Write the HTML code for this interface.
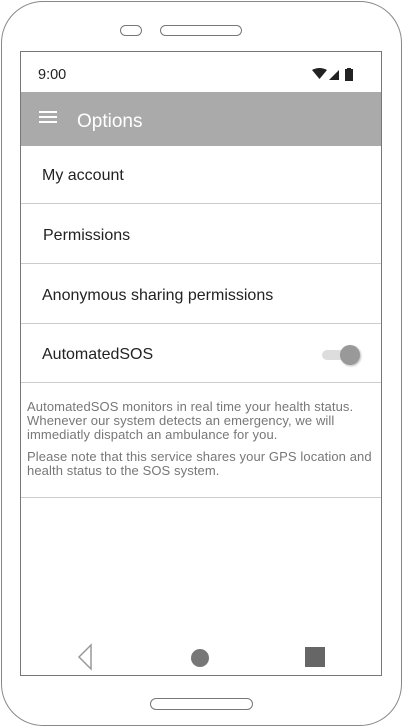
<!DOCTYPE html>
<html><head><meta charset="utf-8"><style>
*{margin:0;padding:0;box-sizing:border-box}
body{width:403px;height:727px;background:#fff;position:relative;overflow:hidden;font-family:"Liberation Sans",sans-serif;color:#222}
.phone{position:absolute;left:1px;top:1px;width:401px;height:725px;border:1.5px solid #888;border-radius:42px}
.pill{position:absolute;border:1.5px solid #777;border-radius:6px;background:#fff}
.screen{position:absolute;left:20px;top:51px;width:362px;height:625px;border:1.5px solid #777;background:#fff}
.status{position:absolute;left:0;top:0;width:100%;height:40px;font-size:14px}
.bar{position:absolute;left:0;top:40px;width:100%;height:54px;background:#aaa;color:#fff;font-size:19px}
.row{position:absolute;left:0;width:100%;border-bottom:1.5px solid #ccc;font-size:16px;color:#222}
.row span{position:absolute;left:21px}
.desc{position:absolute;left:6px;font-size:13px;color:#777;line-height:14px;width:352px;letter-spacing:0.1px}
</style></head><body>
<div class="phone"></div>
<div class="pill" style="left:120px;top:25px;width:22px;height:11px"></div>
<div class="pill" style="left:160px;top:25px;width:82px;height:11px"></div>
<div class="pill" style="left:150px;top:698px;width:103px;height:12px"></div>
<div class="screen">
 <div class="status"><span style="position:absolute;left:17px;top:15px;font-size:14.5px">9:00</span>
  <svg style="position:absolute;left:291px;top:16px" width="50" height="14">
   <path d="M0 2 Q7.5 -2 15 2 L7.5 11Z" fill="#222"/>
   <path d="M17 12 L27 2 L27 12Z" fill="#222"/>
   <rect x="33" y="1" width="8" height="12" fill="#222"/><rect x="35" y="0" width="4" height="2" fill="#222"/>
  </svg></div>
 <div class="bar">
  <svg style="position:absolute;left:18px;top:19px" width="20" height="14"><rect y="0" width="18" height="2" fill="#fff"/><rect y="5" width="18" height="2" fill="#fff"/><rect y="10" width="18" height="2" fill="#fff"/></svg>
  <span style="position:absolute;left:56px;top:19px">Options</span></div>
 <div class="row" style="top:94px;height:58px"><span style="top:21px">My account</span></div>
 <div class="row" style="top:152px;height:60px"><span style="top:23px;left:22px">Permissions</span></div>
 <div class="row" style="top:212px;height:60px"><span style="top:23px">Anonymous sharing permissions</span></div>
 <div class="row" style="top:272px;height:59px"><span style="top:22px">AutomatedSOS</span>
  <div style="position:absolute;left:301px;top:26px;width:34px;height:10px;border-radius:5px;background:#ddd"></div>
  <div style="position:absolute;left:319px;top:21px;width:20px;height:20px;border-radius:50%;background:#999;box-shadow:1px 1px 2px #bbb"></div></div>
 <div class="desc" style="top:348px">AutomatedSOS monitors in real time your health status. Whenever our system detects an emergency, we will immediatly dispatch an ambulance for you.</div>
 <div class="desc" style="top:398px">Please note that this service shares your GPS location and health status to the SOS system.</div>
 <div style="position:absolute;left:0;top:445px;width:100%;border-bottom:1.5px solid #ccc"></div>
 <svg style="position:absolute;left:56px;top:591px" width="18" height="28"><path d="M14 2 L2 14 L14 26Z" fill="none" stroke="#999" stroke-width="1.5"/></svg>
 <div style="position:absolute;left:170px;top:597px;width:18px;height:18px;border-radius:50%;background:#777"></div>
 <div style="position:absolute;left:284px;top:595px;width:20px;height:20px;background:#666"></div>
</div>
</body></html>
